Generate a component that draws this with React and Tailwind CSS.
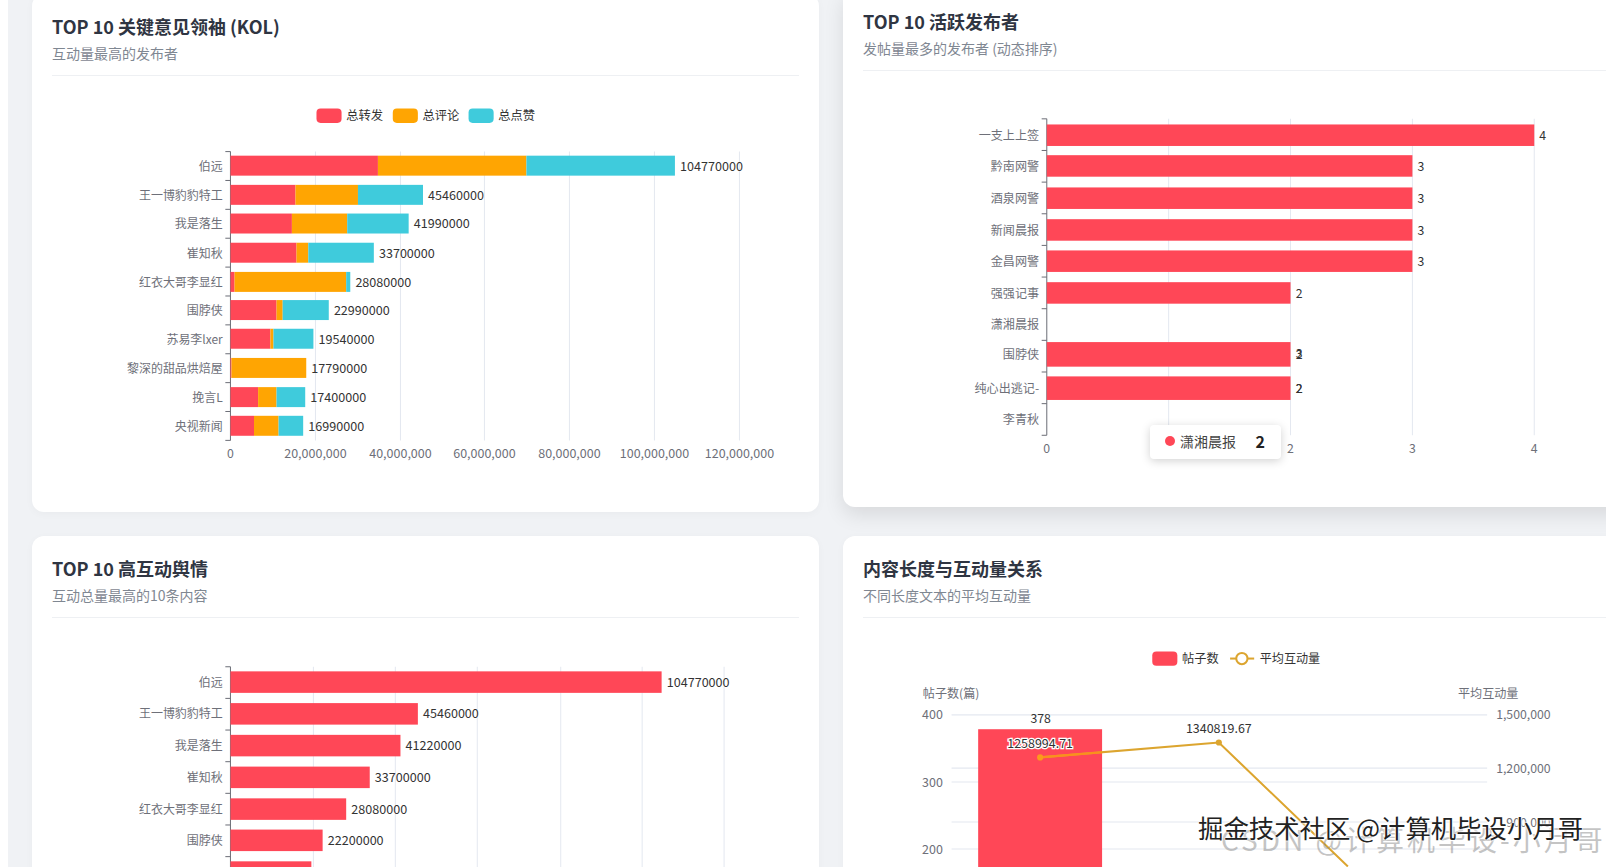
const RED = "#ff4757";
const ORANGE = "#ffa502";
const CYAN = "#3fcbdc";
const AXIS = "#6e7079";
const GRID = "#e4e8f0";
const LABEL = "#333333";

const kol = [
  ["伯远", 369, 514, 659, "104770000", 162],
  ["王一博豹豹特工", 288.5, 349.5, 413, "45460000", 190.5],
  ["我是落生", 285, 339, 399, "41990000", 218.5],
  ["崔知秋", 289.5, 301, 365, "33700000", 247],
  ["红衣大哥李显红", 229, 338, 342, "28080000", 275.5],
  ["围脖侠", 270, 276, 321, "22990000", 303],
  ["苏易李lxer", 264, 267, 306, "19540000", 331],
  ["黎深的甜品烘焙屋", 226, 299, 299, "17790000", 359.5],
  ["挽言L", 252, 270, 298, "17400000", 388],
  ["央视新闻", 248, 272, 296, "16990000", 416],
];

const active = [
  ["一支上上签", 1498, "4", 132, 21],
  ["黔南网警", 1379, "3", 162, 21],
  ["酒泉网警", 1379, "3", 193.5, 21],
  ["新闻晨报", 1379, "3", 224.5, 21],
  ["金昌网警", 1379, "3", 255, 21],
  ["强强记事", 1260, "2", 286, 21],
  ["潇湘晨报", null, "", 317, 0],
  ["围脖侠", 1260, "2", 346, 24],
  ["纯心出逃记-", 1260, "2", 379, 23],
  ["李青秋", null, "", 409.5, 0],
];

const top = [
  ["伯远", 646, "104770000", 666],
  ["王一博豹豹特工", 408, "45460000", 697],
  ["我是落生", 391, "41220000", 728],
  ["崔知秋", 361, "33700000", 759],
  ["红衣大哥李显红", 338, "28080000", 790],
  ["围脖侠", 315, "22200000", 820.5],
];

function Legend({ x, y, color, label }) {
  return (
    <g>
      <rect x={x} y={y - 7} width={24.5} height={14} rx={4} fill={color} />
      <text x={x + 29} y={y + 4} fontSize="12" fill={LABEL}>{label}</text>
    </g>
  );
}

function Chart1() {
  const grid = [308, 391, 473, 556, 639, 722];
  const xl = ["20,000,000", "40,000,000", "60,000,000", "80,000,000", "100,000,000", "120,000,000"];
  return (
    <svg viewBox="50.8 74.2 729.3 406.2" className="block w-[747px] h-[416px]">
      <Legend x={309} y={113} color={RED} label="总转发" />
      <Legend x={383.5} y={113} color={ORANGE} label="总评论" />
      <Legend x={457.5} y={113} color={CYAN} label="总点赞" />
      {grid.map((g) => <line key={g} x1={g} x2={g} y1={148} y2={430} stroke={GRID} />)}
      <line x1={225} x2={225} y1={148} y2={430} stroke={AXIS} />
      {Array.from({ length: 11 }, (_, i) => 148 + i * 28.2).map((t) => (
        <line key={t} x1={220} x2={225} y1={t} y2={t} stroke={AXIS} />
      ))}
      {kol.map(([n, a, b, c, v, y]) => (
        <g key={n}>
          <rect x={225} y={y - 10} width={a - 225} height={19.5} fill={RED} />
          <rect x={a} y={y - 10} width={b - a} height={19.5} fill={ORANGE} />
          <rect x={b} y={y - 10} width={c - b} height={19.5} fill={CYAN} />
          <text x={217.5} y={y + 4.5} textAnchor="end" fontSize="11.7" fill={AXIS}>{n}</text>
          <text x={c + 5} y={y + 4.5} fontSize="12.3" fill={LABEL}>{v}</text>
        </g>
      ))}
      <text x={225} y={447.5} textAnchor="middle" fontSize="12" fill={AXIS}>0</text>
      {grid.map((g, i) => (
        <text key={g} x={g} y={447.5} textAnchor="middle" fontSize="12.2" fill={AXIS}>{xl[i]}</text>
      ))}
    </svg>
  );
}

function Chart2() {
  const grid = [1141, 1260, 1379, 1498];
  return (
    <svg viewBox="842.6 69.3 729.3 406.2" className="block w-[747px] h-[416px]">
      {grid.map((g) => <line key={g} x1={g} x2={g} y1={116} y2={425} stroke={GRID} />)}
      <line x1={1022} x2={1022} y1={116} y2={425} stroke={AXIS} />
      {Array.from({ length: 11 }, (_, i) => 116 + i * 30.9).map((t) => (
        <line key={t} x1={1017} x2={1022} y1={t} y2={t} stroke={AXIS} />
      ))}
      {active.map(([n, end, v, y, h]) => (
        <g key={n}>
          {end && <rect x={1022} y={y - h / 2} width={end - 1022} height={h} fill={RED} />}
          <text x={1014.5} y={y + 4.5} textAnchor="end" fontSize="11.8" fill={AXIS}>{n}</text>
          {end && <text x={end + 5} y={y + 4.5} fontSize="12" fill={LABEL}>{v}</text>}
        </g>
      ))}
      <text x={1265} y={350} fontSize="12" fill={LABEL}>3</text>
      <text x={1265} y={384} fontSize="12" fill={LABEL}>2</text>
      {[[1022, "0"], [1141, "1"], [1260, "2"], [1379, "3"], [1498, "4"]].map(([x, t]) => (
        <text key={t} x={x} y={442.5} textAnchor="middle" fontSize="12" fill={AXIS}>{t}</text>
      ))}
    </svg>
  );
}

function Chart3() {
  const grid = [306, 386, 466, 547.5, 627, 707];
  return (
    <svg viewBox="50.8 603.4 729.3 406.2" className="block w-[747px] h-[416px]">
      {grid.map((g) => <line key={g} x1={g} x2={g} y1={651} y2={960} stroke={GRID} />)}
      <line x1={225} x2={225} y1={651} y2={960} stroke={AXIS} />
      {Array.from({ length: 10 }, (_, i) => 651 + i * 30.9).map((t) => (
        <line key={t} x1={220} x2={225} y1={t} y2={t} stroke={AXIS} />
      ))}
      {top.map(([n, end, v, y]) => (
        <g key={n}>
          <rect x={225} y={y - 10.5} width={end - 225} height={21} fill={RED} />
          <text x={217.5} y={y + 4.5} textAnchor="end" fontSize="11.7" fill={AXIS}>{n}</text>
          <text x={end + 5} y={y + 4.5} fontSize="12.3" fill={LABEL}>{v}</text>
        </g>
      ))}
      <rect x={225} y={841} width={79} height={21} fill={RED} />
    </svg>
  );
}

function Chart4() {
  return (
    <svg viewBox="842.6 603.4 729.3 406.2" className="block w-[747px] h-[416px]">
      <Legend x={1125} y={643} color={RED} label="帖子数" />
      <line x1={1201} x2={1224.5} y1={643} y2={643} stroke="#dca52f" strokeWidth="2" />
      <circle cx={1212.5} cy={643} r={5.5} fill="#fff" stroke="#dca52f" strokeWidth="2" />
      <text x={1230} y={647} fontSize="11.8" fill={LABEL}>平均互动量</text>
      <text x={901} y={681.5} fontSize="11.8" fill={AXIS}>帖子数(篇)</text>
      <text x={1453} y={681.5} textAnchor="middle" fontSize="11.8" fill={AXIS}>平均互动量</text>
      {[698, 763.5, 829, 750, 802.5].map((y) => (
        <line key={y} x1={929} x2={1452} y1={y} y2={y} stroke={GRID} />
      ))}
      {[[698, "400"], [763.5, "300"], [829, "200"]].map(([y, t]) => (
        <text key={t} x={920.5} y={y + 4.5} textAnchor="end" fontSize="12.2" fill={AXIS}>{t}</text>
      ))}
      {[[698, "1,500,000"], [750, "1,200,000"], [803, "900,000"]].map(([y, t]) => (
        <text key={t} x={1514} y={y + 4.5} textAnchor="end" fontSize="12" fill={AXIS}>{t}</text>
      ))}
      <rect x={955} y={712} width={121} height={160} fill={RED} />
      <polyline points="1015.5,739.5 1190,725 1316,846" fill="none" stroke="#dca52f" strokeWidth="2" />
      <line x1={1015.5} y1={739.5} x2={1076} y2={734.5} stroke="#fb8f1c" strokeWidth="2" />
      <circle cx={1015.5} cy={739.5} r={3} fill="#fb9a1c" />
      <circle cx={1190} cy={725} r={3} fill="#dca52f" />
      <text x={1016} y={706} textAnchor="middle" fontSize="12" fill={LABEL}>378</text>
      <text x={1015.5} y={730.5} textAnchor="middle" fontSize="12.2" fill={LABEL} stroke="#fff" strokeWidth="2.5" paintOrder="stroke">1258994.71</text>
      <text x={1190} y={716} textAnchor="middle" fontSize="12.2" fill={LABEL}>1340819.67</text>
    </svg>
  );
}

function Card({ title, subtitle, lifted, children }) {
  return (
    <div
      className={
        "relative h-[518px] rounded-xl bg-white px-5 pt-[18px] " +
        (lifted ? "-translate-y-[5px] shadow-[0_8px_20px_rgba(0,0,0,0.10)]" : "shadow-[0_2px_8px_rgba(0,0,0,0.03)]")
      }
    >
      <div className="h-[64px] border-b border-[#eef0f3]">
        <h2 className="text-lg leading-7 font-bold text-[#2f3542]">{title}</h2>
        <p className="mt-[3px] text-sm leading-5 text-[#7f8792]">{subtitle}</p>
      </div>
      {children}
    </div>
  );
}

export default function App() {
  return (
    <div className="relative h-[867px] w-[1606px] overflow-hidden bg-white font-['Noto_Sans_CJK_SC','Noto_Sans',sans-serif]">
      <div className="ml-2 flex h-full flex-col bg-[#f0f2f5] pl-6">
        <div className="-mt-[6px] grid w-[1598px] grid-cols-[787px_787px] gap-6">
          <Card title="TOP 10 关键意见领袖 (KOL)" subtitle="互动量最高的发布者">
            <Chart1 />
          </Card>
          <Card title="TOP 10 活跃发布者" subtitle="发帖量最多的发布者 (动态排序)" lifted>
            <Chart2 />
            <div className="absolute left-[307px] top-[436px] flex h-[34px] w-[131px] items-center rounded bg-white pb-[3px] pl-[15px] pr-4 text-sm text-[#444] shadow-[0_2px_10px_rgba(0,0,0,0.18)]">
              <span className="mr-[5px] h-[10px] w-[10px] rounded-full bg-[#ff4757]" />
              <span>潇湘晨报</span>
              <span className="ml-auto text-base font-bold text-[#222]">2</span>
            </div>
          </Card>
          <Card title="TOP 10 高互动舆情" subtitle="互动总量最高的10条内容">
            <Chart3 />
          </Card>
          <Card title="内容长度与互动量关系" subtitle="不同长度文本的平均互动量">
            <Chart4 />
          </Card>
        </div>
      </div>
      <div className="absolute left-[1221px] top-[821px] whitespace-nowrap text-[28px] leading-9 tracking-[3px] text-[#8a8a8a]/50">
        CSDN @计算机毕设-小月哥
      </div>
      <div className="absolute left-[1198px] top-[809px] whitespace-nowrap text-[25.4px] leading-9 text-[#222] [text-shadow:0_0_1px_#fff,0_0_2px_#fff,0_0_2px_#fff,0_0_3px_#fff]">
        掘金技术社区 @计算机毕设小月哥
      </div>
    </div>
  );
}
